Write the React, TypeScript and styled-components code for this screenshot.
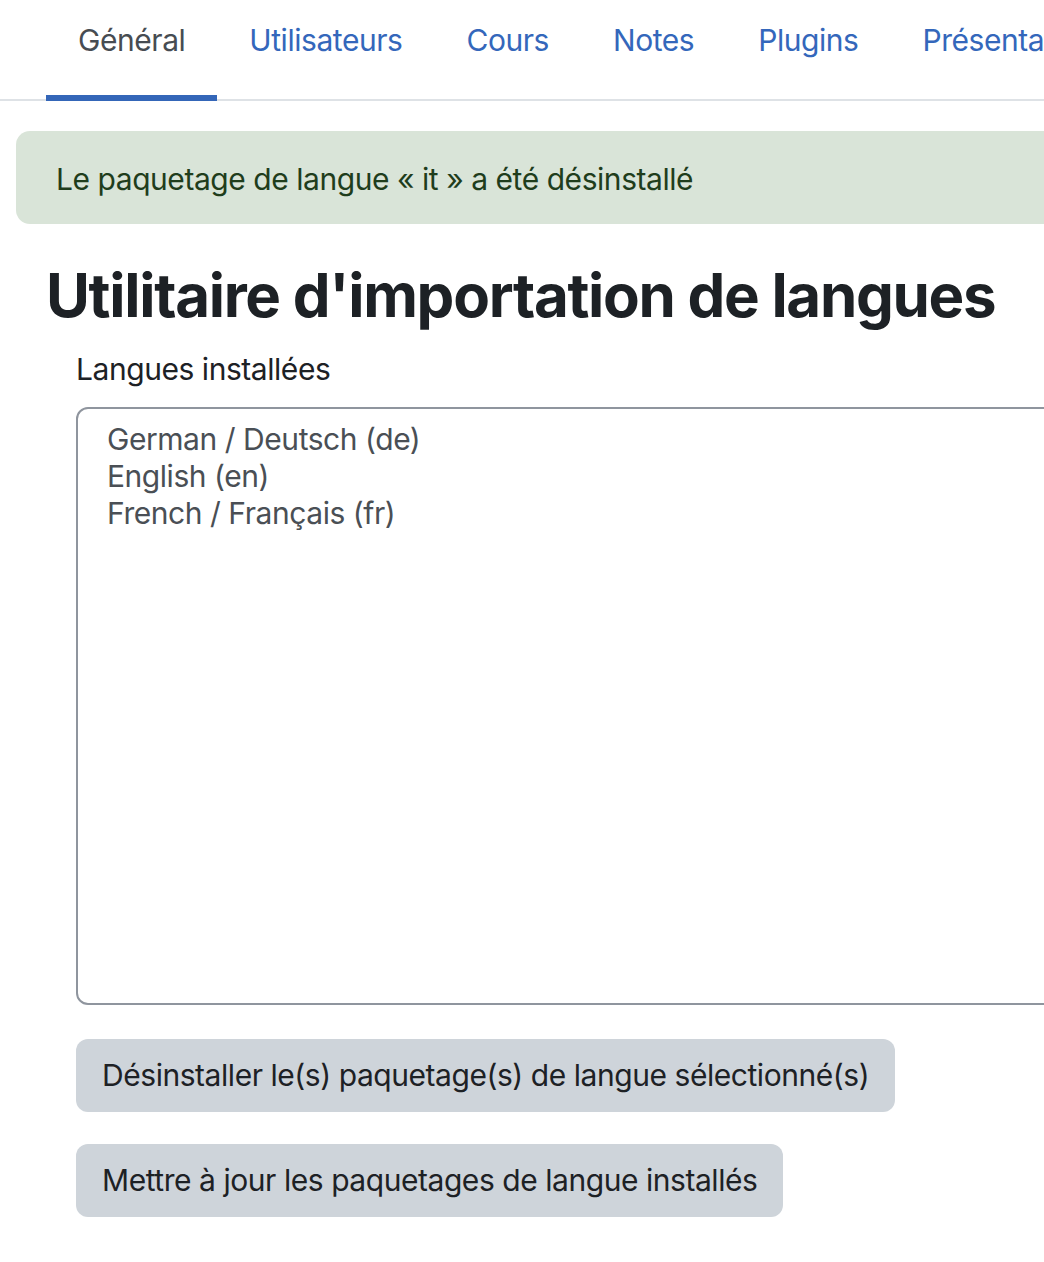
import { createGlobalStyle } from 'styled-components';
import styled from 'styled-components';

const GlobalStyle = createGlobalStyle`
    html, body {
        margin: 0;
        padding: 0;
        background: #ffffff;
        overflow: hidden;
    }
    body {
        font-family: Inter, "Noto Sans", "Liberation Sans", sans-serif;
        font-size: 30px;
        line-height: 45px;
        letter-spacing: -0.45px;
        color: #1d2125;
    }
`;

const Page = styled.div`
    width: 1044px;
    overflow: hidden;
    padding-left: 16px;
    box-sizing: border-box;
`;

const TabBar = styled.nav`
    display: flex;
    flex-wrap: nowrap;
    width: 1200px;
    margin-left: -16px;
    padding-left: 46px;
    border-bottom: 2px solid #dee2e6;
    white-space: nowrap;
`;

const Tab = styled.a<{ $active?: boolean }>`
    display: block;
    padding: 18px 32px 32px;
    margin-bottom: -2px;
    border-bottom: 6px solid ${(p) => (p.$active ? '#3466b8' : 'transparent')};
    color: ${(p) => (p.$active ? '#474c52' : '#3467bb')};
    text-decoration: none;
    cursor: pointer;
`;

const Alert = styled.div`
    width: 1100px;
    margin-top: 30px;
    padding: 26px 40px 22px;
    border-radius: 14px;
    background: #d9e4d8;
    color: #1f3d1c;
    box-sizing: border-box;
`;

const Heading = styled.h2`
    margin: 35px 0 16px 30px;
    font-size: 60px;
    line-height: 72px;
    font-weight: 700;
    letter-spacing: -1.3px;
    color: #1d2125;
`;

const Form = styled.form`
    display: flex;
    flex-direction: column;
    align-items: flex-start;
    margin-left: 60px;
`;

const Label = styled.label`
    margin-bottom: 15px;
    color: #1d2125;
`;

const ListBox = styled.div`
    width: 1100px;
    height: 598px;
    box-sizing: border-box;
    padding: 12px 29px;
    border: 2px solid #8f959e;
    border-radius: 12px;
    background: #fff;
`;

const Option = styled.div`
    line-height: 37px;
    color: #4a4f55;
`;

const Button = styled.button`
    margin-top: 34px;
    padding: 12px 24px;
    border: 2px solid transparent;
    border-radius: 12px;
    background: #ced4da;
    color: #1d2125;
    font: inherit;
    letter-spacing: inherit;
    line-height: 45px;
    cursor: pointer;

    & + & {
        margin-top: 32px;
    }
`;

const tabs = ['Général', 'Utilisateurs', 'Cours', 'Notes', 'Plugins', 'Présentation', 'Serveur'];
const languages = ['German / Deutsch (de)', 'English (en)', 'French / Français (fr)'];

export default function App() {
    return (
        <>
            <GlobalStyle />
            <Page>
                <TabBar>
                    {tabs.map((t, i) => (
                        <Tab key={t} $active={i === 0}>
                            {t}
                        </Tab>
                    ))}
                </TabBar>
                <Alert>Le paquetage de langue « it » a été désinstallé</Alert>
                <Heading>Utilitaire d'importation de langues</Heading>
                <Form onSubmit={(e) => e.preventDefault()}>
                    <Label>Langues installées</Label>
                    <ListBox role="listbox" aria-multiselectable="true">
                        {languages.map((l) => (
                            <Option key={l} role="option">
                                {l}
                            </Option>
                        ))}
                    </ListBox>
                    <Button type="button">Désinstaller le(s) paquetage(s) de langue sélectionné(s)</Button>
                    <Button type="button">Mettre à jour les paquetages de langue installés</Button>
                </Form>
            </Page>
        </>
    );
}
